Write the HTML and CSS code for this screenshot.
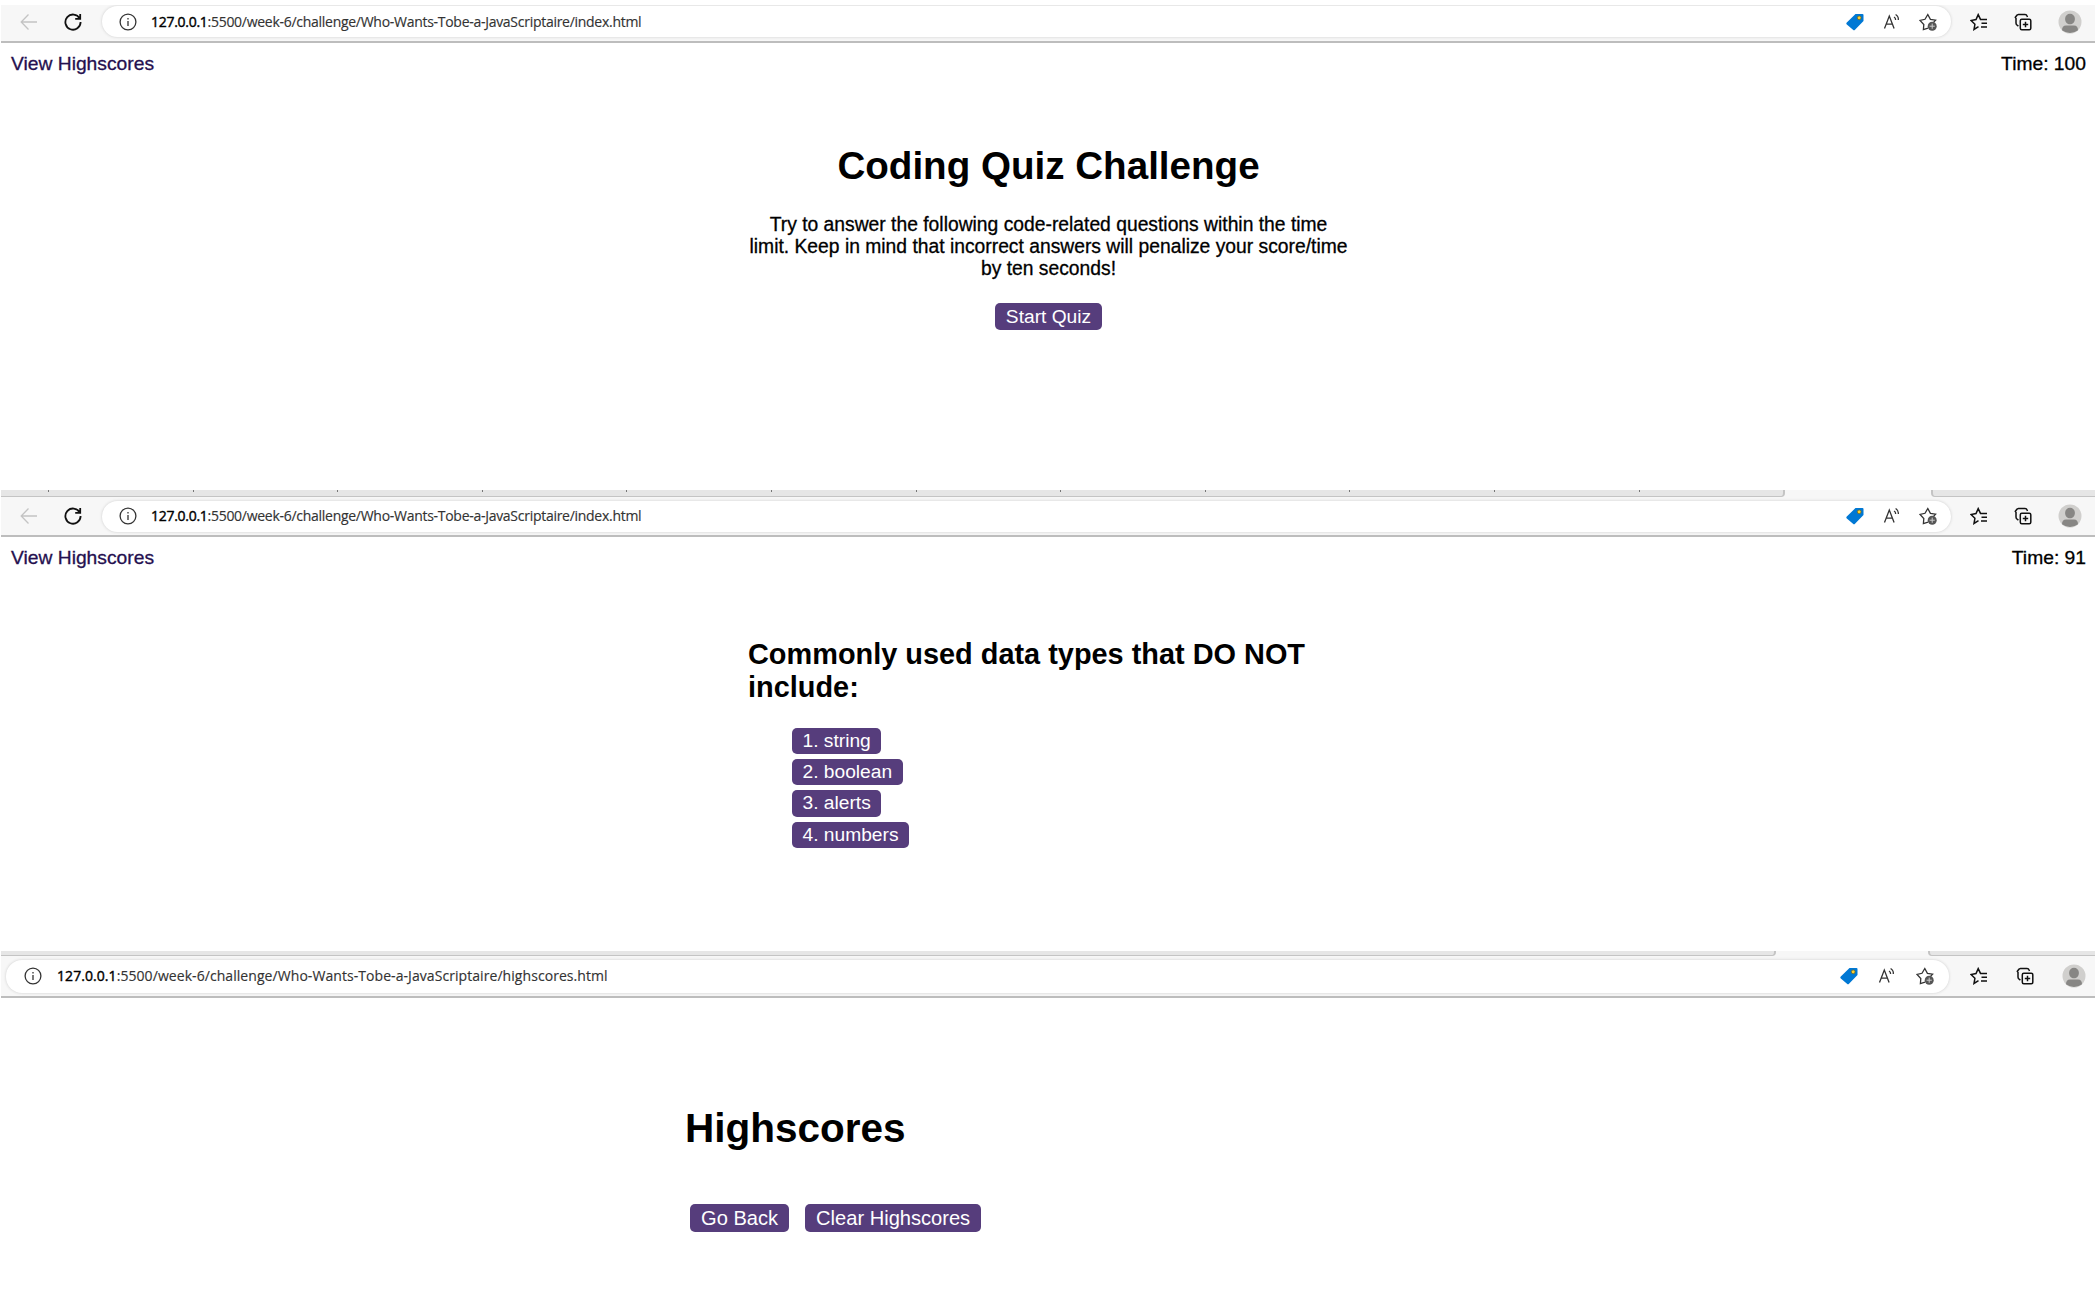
FILE: index.html
```html
<!DOCTYPE html>
<html lang="en">
<head>
<meta charset="utf-8">
<title>Coding Quiz Challenge</title>
<link rel="stylesheet" href="styles.css">
</head>
<body>
<svg class="symbols" aria-hidden="true">
  <symbol id="back" viewBox="0 0 18 18"><path d="M17 9H1.500M8.500 1.500 1.200 9l7.300 7.500"/></symbol>
  <symbol id="reload" viewBox="0 0 18 18"><path d="M15.700 5.500A7.600 7.600 0 1 0 16.600 9M16.200 1v4.800h-5"/></symbol>
  <symbol id="info" viewBox="0 0 18 18"><circle cx="9" cy="9" r="7.900"/><path d="M9 8v5M9 5v1.400"/></symbol>
  <symbol id="tag" viewBox="0 0 18 18"><path d="M9.500 1h7q1 0 1 1v6L9 16.800q-1 1-2 0L.8 11.500q-1-1 0-2Z" fill="#0078d4" stroke="none"/><circle cx="13.200" cy="4.800" r="1.900" fill="#ffd02e" stroke="#6b611b" stroke-width=".7"/></symbol>
  <symbol id="read" viewBox="0 0 18 18"><path d="M1.500 15.500 6.300 3l4.800 12.500M3.200 11.200h6.200M11 4q1.800 1 1.600 3M12.600 1.500q3.200 2 2.700 5.500"/></symbol>
  <symbol id="star" viewBox="0 0 18 18"><path d="M9 15.200 4.400 16.700l.4-5.200L1 7.400l5-1.100L8.800 1.500l2.600 4.800 5.200.9-3 3.200"/><circle cx="13.200" cy="13.200" r="4.500" fill="#555" stroke="none"/><path d="M13.200 10.600v5.200M10.600 13.200h5.200" stroke="#ccc" stroke-width="1"/></symbol>
  <symbol id="favorites" viewBox="0 0 18 18"><path d="M8.500 13.700 4 16.500l.9-5.200L1 7.500l5-1L8.200 1.600l2.300 4.800H17M11.500 10.200H17M11 14h6"/></symbol>
  <symbol id="collections" viewBox="0 0 18 18"><rect x="6.300" y="6.300" width="10.500" height="10.500" rx="1.500"/><path d="M11.500 8.800v5.400M8.800 11.500h5.400M4.400 13.200 2.900 12q-.9-.7-.9-1.900V5.300L1.300 4.300 3 2.200l1.600-.8H11q1.600 0 2.100 1.600l.4 1"/></symbol>
  <symbol id="person" viewBox="0 0 24 24"><circle cx="12" cy="12" r="11.500" fill="#d0cfcd" stroke="none"/><path d="M12 3.800a4.900 4.900 0 0 1 4.900 4.900c0 2.700-1.400 5.600-4.900 5.600S7.100 11.400 7.100 8.700A4.900 4.900 0 0 1 12 3.800M4 20.300q0-4.800 4-4.800h8q4 0 4 4.800-8 5.600-16 0" fill="#878684" stroke="none"/></symbol>
</svg>

<section class="shot shot-start">
  <div class="toolbar">
    <svg class="icon nav back"><use href="#back"/></svg>
    <svg class="icon nav reload"><use href="#reload"/></svg>
    <div class="address">
      <svg class="icon"><use href="#info"/></svg>
      <span class="url"><b>127.0.0.1</b>:5500/week-6/challenge/Who-Wants-Tobe-a-JavaScriptaire/index.html</span>
      <span class="actions"><svg class="icon"><use href="#tag"/></svg><svg class="icon"><use href="#read"/></svg><svg class="icon"><use href="#star"/></svg></span>
    </div>
    <div class="tools"><svg class="icon"><use href="#favorites"/></svg><svg class="icon"><use href="#collections"/></svg><svg class="avatar"><use href="#person"/></svg></div>
  </div>
  <header class="page-head"><a class="scores-link">View Highscores</a><span>Time: 100</span></header>
  <main class="intro">
    <h1>Coding Quiz Challenge</h1>
    <p>Try to answer the following code-related questions within the time<br>limit. Keep in mind that incorrect answers will penalize your score/time<br>by ten seconds!</p>
    <button class="btn">Start Quiz</button>
  </main>
</section>

<section class="shot shot-question">
  <div class="tabs"><div class="tab-left ticks"></div><div class="tab-active"></div><div class="tab-right"></div></div>
  <div class="toolbar">
    <svg class="icon nav back"><use href="#back"/></svg>
    <svg class="icon nav reload"><use href="#reload"/></svg>
    <div class="address">
      <svg class="icon"><use href="#info"/></svg>
      <span class="url"><b>127.0.0.1</b>:5500/week-6/challenge/Who-Wants-Tobe-a-JavaScriptaire/index.html</span>
      <span class="actions"><svg class="icon"><use href="#tag"/></svg><svg class="icon"><use href="#read"/></svg><svg class="icon"><use href="#star"/></svg></span>
    </div>
    <div class="tools"><svg class="icon"><use href="#favorites"/></svg><svg class="icon"><use href="#collections"/></svg><svg class="avatar"><use href="#person"/></svg></div>
  </div>
  <header class="page-head"><a class="scores-link">View Highscores</a><span>Time: 91</span></header>
  <main class="question">
    <h2>Commonly used data types that DO NOT<br>include:</h2>
    <div class="answers">
      <button class="btn">1. string</button>
      <button class="btn">2. boolean</button>
      <button class="btn">3. alerts</button>
      <button class="btn">4. numbers</button>
    </div>
  </main>
</section>

<section class="shot shot-scores">
  <div class="tabs"><div class="tab-left"></div><div class="tab-active"></div><div class="tab-right"></div></div>
  <div class="toolbar">
    <div class="address">
      <svg class="icon"><use href="#info"/></svg>
      <span class="url"><b>127.0.0.1</b>:5500/week-6/challenge/Who-Wants-Tobe-a-JavaScriptaire/highscores.html</span>
      <span class="actions"><svg class="icon"><use href="#tag"/></svg><svg class="icon"><use href="#read"/></svg><svg class="icon"><use href="#star"/></svg></span>
    </div>
    <div class="tools"><svg class="icon"><use href="#favorites"/></svg><svg class="icon"><use href="#collections"/></svg><svg class="avatar"><use href="#person"/></svg></div>
  </div>
  <main class="scores">
    <h1>Highscores</h1>
    <div class="score-actions"><button class="btn">Go Back</button><button class="btn">Clear Highscores</button></div>
  </main>
</section>
</body>
</html>
```
FILE: styles.css
```css
* { box-sizing: border-box; }
body { margin: 0; padding: 5px 2px 0 1px; background: #fff; color: #000; font: 19.25px/22px "Liberation Sans", Arial, sans-serif; }
.symbols { display: none; }
.shot { overflow: hidden; }
.shot-start { height: 485px; }
.shot-question { height: 461px; }
.shot-scores { height: 339px; }

/* browser chrome */
.toolbar { display: flex; align-items: center; height: 38px; padding-bottom: 3px; background: #f7f7f7; border-bottom: 2px solid #bdbdbd; }
.icon { width: 18px; height: 18px; flex: none; fill: none; stroke: #333; stroke-width: 1.3; }
.avatar { width: 24px; height: 24px; flex: none; }
.nav { margin-left: 19px; }
.back { stroke: #c4c4c4; }
.reload { margin-left: 26px; stroke: #111; stroke-width: 1.8; }
.address { display: flex; align-items: center; flex: none; width: 1849px; height: 31px; margin-left: 20px; padding: 0 14px 0 17px; background: #fff; border-radius: 16px; box-shadow: 0 0 3px #ccc; }
.url { margin-left: 14px; font: 14px/20px "Open Sans", "Noto Sans", sans-serif; letter-spacing: -0.28px; color: #333; white-space: nowrap; -webkit-text-stroke: 0.15px; }
.url b { font-weight: 400; color: #000; -webkit-text-stroke: 0.4px; }
.actions { display: flex; gap: 18.5px; margin-left: auto; }
.tools { display: flex; align-items: center; gap: 26px; margin-left: 19px; }
.tools .icon { stroke: #111; stroke-width: 1.5; }

.tabs { display: flex; height: 7px; background: #f7f7f7; }
.tab-left { width: 1784px; background: #e6e6e6; border: solid #c4c4c4; border-width: 0 2px 1px 0; border-radius: 0 0 4px 0; }
.tab-active { width: 146px; }
.tab-right { flex: 1; background: #e6e6e6; border: solid #c4c4c4; border-width: 0 0 1px 2px; border-radius: 0 0 0 4px; }
.ticks { background: repeating-linear-gradient(90deg, #777 0 1px, transparent 1px 144.6px) 47px 0 / 1737px 2px no-repeat #e6e6e6; }
.shot-question .toolbar { height: 40px; padding-bottom: 0; }

.shot-scores .tabs { height: 5px; }
.shot-scores .tab-left { width: 1775px; }
.shot-scores .tab-active { width: 152px; }
.shot-scores .toolbar { height: 42px; padding-bottom: 0; }
.shot-scores .address { width: 1943px; height: 33px; margin-left: 5px; padding: 0 15px 0 18px; }
.shot-scores .url { margin-left: 15px; letter-spacing: 0.065px; }
.shot-scores .actions { gap: 20px; }
.shot-scores .tools { gap: 28px; margin-left: 21px; }

/* quiz pages */
.page-head { display: flex; justify-content: space-between; padding: 10px 9px 0 10px; -webkit-text-stroke: 0.3px; }
.scores-link { color: #25104f; }
h1, h2, p { margin: 0; }
.btn { display: block; height: 27px; padding: 0 10.5px; border: 0; border-radius: 5px; background: #563d7c; color: #fff; font: 19.2px/27px "Liberation Sans", Arial, sans-serif; white-space: nowrap; }
.intro { display: flex; flex-direction: column; align-items: center; padding: 69px 0 0 1px; text-align: center; }
.intro h1 { font-size: 38.6px; line-height: 44px; }
.intro p { margin-top: 26px; font-size: 19.3px; -webkit-text-stroke: 0.3px; }
.intro .btn { margin-top: 23px; }
.question { padding: 69px 0 0 747px; }
.question h2 { font-size: 28.9px; line-height: 33px; }
.answers { display: flex; flex-direction: column; align-items: flex-start; gap: 5px; margin: 24px 0 0 44px; }
.answers .btn { height: 26.2px; line-height: 26px; }
.scores { padding: 107px 0 0 684px; }
.scores h1 { font-size: 40.5px; line-height: 46px; }
.score-actions { display: flex; gap: 16px; margin: 53px 0 0 5px; }
.scores .btn { height: 28px; padding: 0 11px; font-size: 20.1px; line-height: 28px; }
```
